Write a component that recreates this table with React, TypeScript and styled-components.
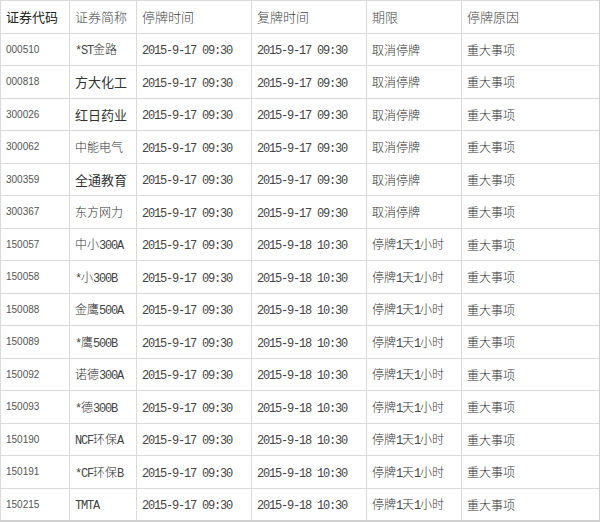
import React from 'react'
import styled, { createGlobalStyle } from 'styled-components'

const GlobalStyle = createGlobalStyle`
  html, body {
    margin: 0;
    padding: 0;
    background: #ffffff;
  }
  body {
    font-family: "Noto Sans CJK SC", "Liberation Sans", sans-serif;
    font-weight: 300;
  }
`

const Table = styled.table`
  width: 599px;
  border-collapse: collapse;
  table-layout: fixed;
  border: 1px solid #d6d6d6;
  border-right: 2px solid #d0d0d0;
  border-bottom: 2px solid #d0d0d0;
`

const Col = styled.col<{ $w: number }>`
  width: ${({ $w }) => $w}px;
`

const Row = styled.tr`
  height: 32.5px;
`

const HeadCell = styled.th<{ $strong?: boolean }>`
  border: 1px solid #dadada;
  padding: 0 0 0 5px;
  text-align: left;
  font-weight: ${({ $strong }) => ($strong ? 400 : 300)};
  font-size: 13px;
  color: ${({ $strong }) => ($strong ? '#222' : '#444')};
  white-space: nowrap;
  overflow: hidden;
`

const Cell = styled.td<{ $big?: boolean }>`
  border: 1px solid #dadada;
  padding: 0 0 0 5px;
  font-size: ${({ $big }) => ($big ? '13px' : '12px')};
  font-weight: ${({ $big }) => ($big ? 400 : 300)};
  color: ${({ $big }) => ($big ? '#333' : '#333')};
  white-space: nowrap;
  overflow: hidden;
`

const CodeCell = styled.td`
  border: 1px solid #dadada;
  padding: 0 0 0 5px;
  font-family: "Liberation Sans", Arial, sans-serif;
  font-weight: 400;
  font-size: 10px;
  color: #555;
`

const Latin = styled.span`
  font-family: "Liberation Mono", monospace;
  font-weight: 400;
  font-size: 12px;
  letter-spacing: -1.2px;
  color: #444;
`

type Item = {
  code: string
  name: string
  big?: boolean
  stop: string
  resume: string
  term: string
  reason: string
}

const rows: Item[] = [
  { code: '000510', name: '*ST金路', stop: '2015-9-17 09:30', resume: '2015-9-17 09:30', term: '取消停牌', reason: '重大事项' },
  { code: '000818', name: '方大化工', big: true, stop: '2015-9-17 09:30', resume: '2015-9-17 09:30', term: '取消停牌', reason: '重大事项' },
  { code: '300026', name: '红日药业', big: true, stop: '2015-9-17 09:30', resume: '2015-9-17 09:30', term: '取消停牌', reason: '重大事项' },
  { code: '300062', name: '中能电气', stop: '2015-9-17 09:30', resume: '2015-9-17 09:30', term: '取消停牌', reason: '重大事项' },
  { code: '300359', name: '全通教育', big: true, stop: '2015-9-17 09:30', resume: '2015-9-17 09:30', term: '取消停牌', reason: '重大事项' },
  { code: '300367', name: '东方网力', stop: '2015-9-17 09:30', resume: '2015-9-17 09:30', term: '取消停牌', reason: '重大事项' },
  { code: '150057', name: '中小300A', stop: '2015-9-17 09:30', resume: '2015-9-18 10:30', term: '停牌1天1小时', reason: '重大事项' },
  { code: '150058', name: '*小300B', stop: '2015-9-17 09:30', resume: '2015-9-18 10:30', term: '停牌1天1小时', reason: '重大事项' },
  { code: '150088', name: '金鹰500A', stop: '2015-9-17 09:30', resume: '2015-9-18 10:30', term: '停牌1天1小时', reason: '重大事项' },
  { code: '150089', name: '*鹰500B', stop: '2015-9-17 09:30', resume: '2015-9-18 10:30', term: '停牌1天1小时', reason: '重大事项' },
  { code: '150092', name: '诺德300A', stop: '2015-9-17 09:30', resume: '2015-9-18 10:30', term: '停牌1天1小时', reason: '重大事项' },
  { code: '150093', name: '*德300B', stop: '2015-9-17 09:30', resume: '2015-9-18 10:30', term: '停牌1天1小时', reason: '重大事项' },
  { code: '150190', name: 'NCF环保A', stop: '2015-9-17 09:30', resume: '2015-9-18 10:30', term: '停牌1天1小时', reason: '重大事项' },
  { code: '150191', name: '*CF环保B', stop: '2015-9-17 09:30', resume: '2015-9-18 10:30', term: '停牌1天1小时', reason: '重大事项' },
  { code: '150215', name: 'TMTA', stop: '2015-9-17 09:30', resume: '2015-9-18 10:30', term: '停牌1天1小时', reason: '重大事项' },
]

const widths = [69, 67, 115, 115, 95, 138]
const headers = ['证券代码', '证券简称', '停牌时间', '复牌时间', '期限', '停牌原因']

// split ascii runs out so they get the narrow mono face
function Mixed({ text }: { text: string }) {
  const parts = text.match(/[\x00-\x7f]+|[^\x00-\x7f]+/g) || []
  return (
    <>
      {parts.map((p, i) =>
        /^[\x00-\x7f]/.test(p) ? <Latin key={i}>{p}</Latin> : <span key={i}>{p}</span>
      )}
    </>
  )
}

export default function App() {
  return (
    <>
      <GlobalStyle />
      <Table>
        <colgroup>
          {widths.map((w, i) => (
            <Col key={i} $w={w} />
          ))}
        </colgroup>
        <thead>
          <Row>
            {headers.map((h, i) => (
              <HeadCell key={h} $strong={i === 0}>
                {h}
              </HeadCell>
            ))}
          </Row>
        </thead>
        <tbody>
          {rows.map((r) => (
            <Row key={r.code}>
              <CodeCell>{r.code}</CodeCell>
              <Cell $big={r.big}>
                <Mixed text={r.name} />
              </Cell>
              <Cell>
                <Latin>{r.stop}</Latin>
              </Cell>
              <Cell>
                <Latin>{r.resume}</Latin>
              </Cell>
              <Cell>
                <Mixed text={r.term} />
              </Cell>
              <Cell>{r.reason}</Cell>
            </Row>
          ))}
        </tbody>
      </Table>
    </>
  )
}
